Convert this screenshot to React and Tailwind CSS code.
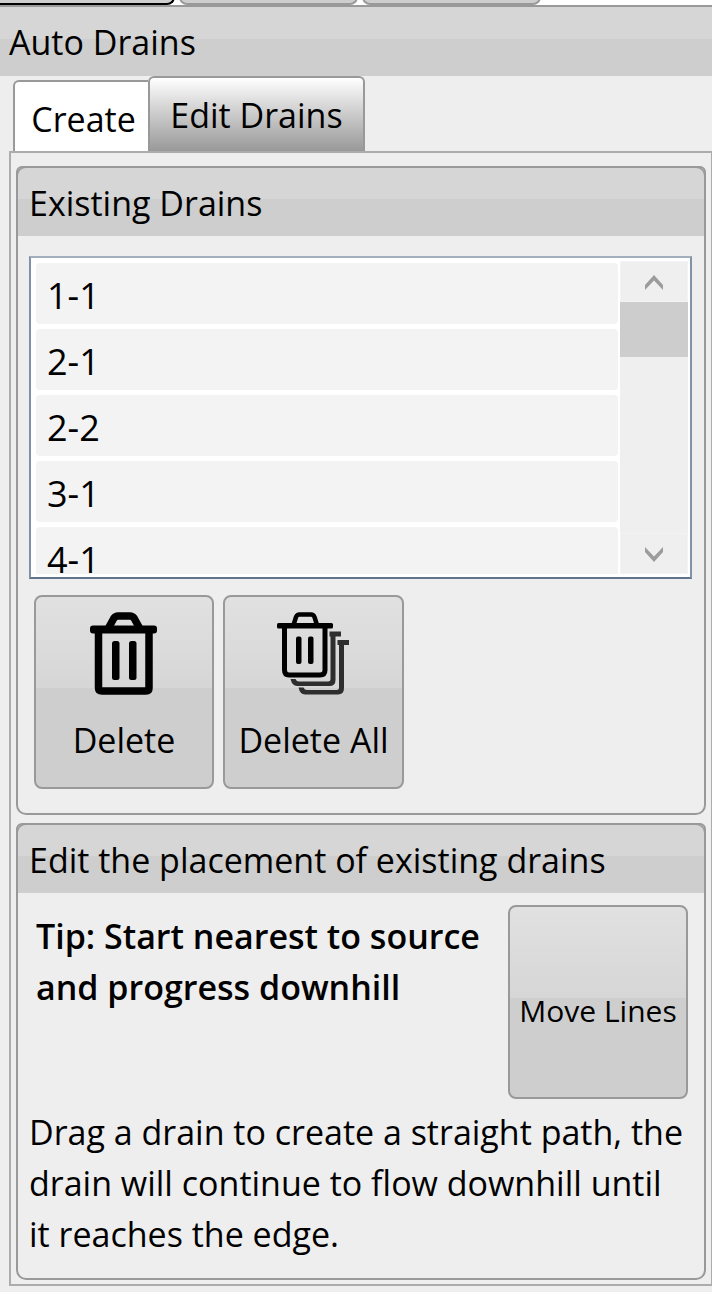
import { useRef, useState } from "react";

const drains = ["1-1", "2-1", "2-2", "3-1", "4-1"];

const TrashIcon = () => (
  <svg viewBox="0 0 68 84" className="h-[84px] w-[68px]" fill="none" stroke="#000" aria-hidden="true">
    <path d="M18.500 16 L24 6 Q25.500 4 28 4 H40 Q42.500 4 44 6 L49.500 16" strokeWidth="7.500" />
    <rect x="0" y="13.500" width="67" height="8" rx="3" fill="#000" stroke="none" />
    <path d="M8.500 20 V76 Q8.500 79 12 79 H56 Q59 79 59 76 V20" strokeWidth="7.500" />
    <rect x="22" y="29" width="7.500" height="39" rx="2.500" fill="#000" stroke="none" />
    <rect x="39" y="29" width="7.500" height="39" rx="2.500" fill="#000" stroke="none" />
  </svg>
);

const TrashAllIcon = () => (
  <svg viewBox="0 0 74 84" className="h-[84px] w-[74px]" fill="none" aria-hidden="true">
    <path d="M16.500 13 L19 5 Q20 2.500 22.500 2.500 H34 Q36.500 2.500 37.500 5 L40 13" stroke="#000" strokeWidth="4.500" />
    <rect x="0" y="11" width="56" height="5.500" rx="1.500" fill="#000" />
    <path d="M7.500 16 V58 Q7.500 63 12 63 H43 Q48 63 48 58 V16" stroke="#000" strokeWidth="5" />
    <rect x="19" y="24.500" width="5.500" height="27.500" rx="2" fill="#000" />
    <rect x="31" y="24.500" width="5.500" height="27.500" rx="2" fill="#000" />
    <path d="M52.500 19.500 H64 V24.500 H58.500 V68 Q58.500 74 52.500 74 H20 Q15 74 13.500 67 H18.500 Q19.500 69.500 22 69.500 H51 Q53.500 69.500 53.500 67 V24.500 H52.500 Z" fill="#2e2e2e" />
    <path d="M60.500 28 H72 V33 H67 V76 Q67 82.500 61 82.500 H28 Q23 82.500 21.500 75.500 H26.500 Q27.500 78 30 78 H59.500 Q62 78 62 75.500 V33 H60.500 Z" fill="#2e2e2e" />
  </svg>
);

const Chevron = ({ down }) => (
  <svg viewBox="0 0 18 16" className="h-4 w-[18px]" fill="#9c9c9c" aria-hidden="true">
    <path d={down ? "M0 1 L9 10.500 L18 1 V6 L9 16 L0 6 Z" : "M0 15 L9 5.500 L18 15 V10 L9 0 L0 10 Z"} />
  </svg>
);

const ToolButton = ({ className = "", children }) => (
  <button
    type="button"
    className={`flex h-[194px] flex-col items-center rounded-lg border-2 border-[#999] bg-[linear-gradient(#e1e1e1,#d6d6d6_48%,#cecece_48%,#cecece)] ${className}`}
  >
    {children}
  </button>
);

const Panel = ({ title, children }) => (
  <section className="overflow-hidden rounded-t-md rounded-b-[10px] border-2 border-[#999]">
    <div className="bg-[#999]">
      <h2 className="h-[68px] rounded-t-lg bg-[linear-gradient(#d6d6d6_46%,#cecece_46%)] px-[11px] leading-[71px] whitespace-nowrap">
        {title}
      </h2>
    </div>
    {children}
  </section>
);

const App = () => {
  const listRef = useRef(null);
  const [tab, setTab] = useState("edit");

  const scrollList = (step) => {
    listRef.current?.scrollBy({ top: step, behavior: "smooth" });
  };

  return (
    <div className="min-h-screen overflow-hidden bg-[#eee] font-['Open_Sans',sans-serif] text-[34px] leading-[51px] text-black">
      {/* Bottom edge of the toolbar */}
      <div className="flex h-[5px] items-end gap-1 bg-white">
        <div className="h-5 w-[175px] shrink-0 rounded-br-lg border-r-2 border-b-2 border-black bg-[#cecece]" />
        <div className="h-5 w-[179px] shrink-0 rounded-b-lg border-2 border-[#999] bg-[#cecece]" />
        <div className="h-5 w-[179px] shrink-0 rounded-b-lg border-2 border-[#999] bg-[#cecece]" />
      </div>

      <h1 className="h-[71px] border-t-2 border-[#999] bg-[linear-gradient(#d6d6d6_46%,#cecece_46%)] px-[9px] leading-[71px]">
        Auto Drains
      </h1>

      {/* Tabs */}
      <div className="flex items-end pl-[13px]" role="tablist">
        <button
          type="button"
          role="tab"
          aria-selected={tab === "create"}
          onClick={() => setTab("create")}
          className="h-[71px] w-[135px] rounded-tl-md border-2 border-r-0 border-b-0 border-[#999] bg-white pl-1 leading-[74px]"
        >
          Create
        </button>
        <button
          type="button"
          role="tab"
          aria-selected={tab === "edit"}
          onClick={() => setTab("edit")}
          className="h-[75px] w-[217px] rounded-t-md border-2 border-b-0 border-[#999] bg-linear-to-b from-white to-[#999] leading-[72px]"
        >
          Edit Drains
        </button>
      </div>

      <main className="ml-[9px] flex flex-col gap-2 border-2 border-r border-[#acacac] px-[5px] pt-[13px] pb-1">
        <Panel title="Existing Drains">
          <div className="pt-5 pr-3 pb-6 pl-[11px]">
            <div className="flex h-[323px] gap-[2px] border-2 border-t-[#a3aebd] border-r-[#7e93a5] border-b-[#5f768a] border-l-[#7e93a5] bg-white py-[3px] pr-[2px] pl-[5px]">
              <ul ref={listRef} className="flex flex-1 flex-col gap-[5px] overflow-hidden pt-[2px] text-[36px]">
                {drains.map((name) => (
                  <li key={name} className="h-[61px] shrink-0 rounded-sm bg-[#f3f3f3] px-[11px] leading-[66px]">
                    {name}
                  </li>
                ))}
              </ul>
              <div className="flex w-[68px] flex-col bg-[#efefef]">
                <button
                  type="button"
                  aria-label="Scroll up"
                  onClick={() => scrollList(-66)}
                  className="flex h-[41px] items-center justify-center border border-[#f3f3f3] pt-[2px]"
                >
                  <Chevron />
                </button>
                <div className="flex-1">
                  <div className="h-[55px] bg-[#cdcdcd]" />
                </div>
                <button
                  type="button"
                  aria-label="Scroll down"
                  onClick={() => scrollList(66)}
                  className="flex h-[41px] items-center justify-center border border-[#f3f3f3]"
                >
                  <Chevron down />
                </button>
              </div>
            </div>

            <div className="mt-4 flex gap-[9px] px-[5px]">
              <ToolButton className="w-[180px] pt-[15px]">
                <TrashIcon />
                <span className="mt-[19px]">Delete</span>
              </ToolButton>
              <ToolButton className="w-[181px] pt-[15px]">
                <TrashAllIcon />
                <span className="mt-[19px] whitespace-nowrap">Delete All</span>
              </ToolButton>
            </div>
          </div>
        </Panel>

        <Panel title="Edit the placement of existing drains">
          <div className="pt-3 pr-3 pb-[18px] pl-[11px]">
            <div className="flex justify-between pr-1 pl-[7px]">
              <p className="w-[450px] pt-[6px] font-semibold">Tip: Start nearest to source and progress downhill</p>
              <ToolButton className="w-[180px] justify-center pt-4 text-[30px] whitespace-nowrap">
                Move Lines
              </ToolButton>
            </div>
            <p className="mt-2 pr-[5px]">
              Drag a drain to create a straight path, the drain will continue to flow downhill until it reaches the edge.
            </p>
          </div>
        </Panel>
      </main>
    </div>
  );
};

export default App;
